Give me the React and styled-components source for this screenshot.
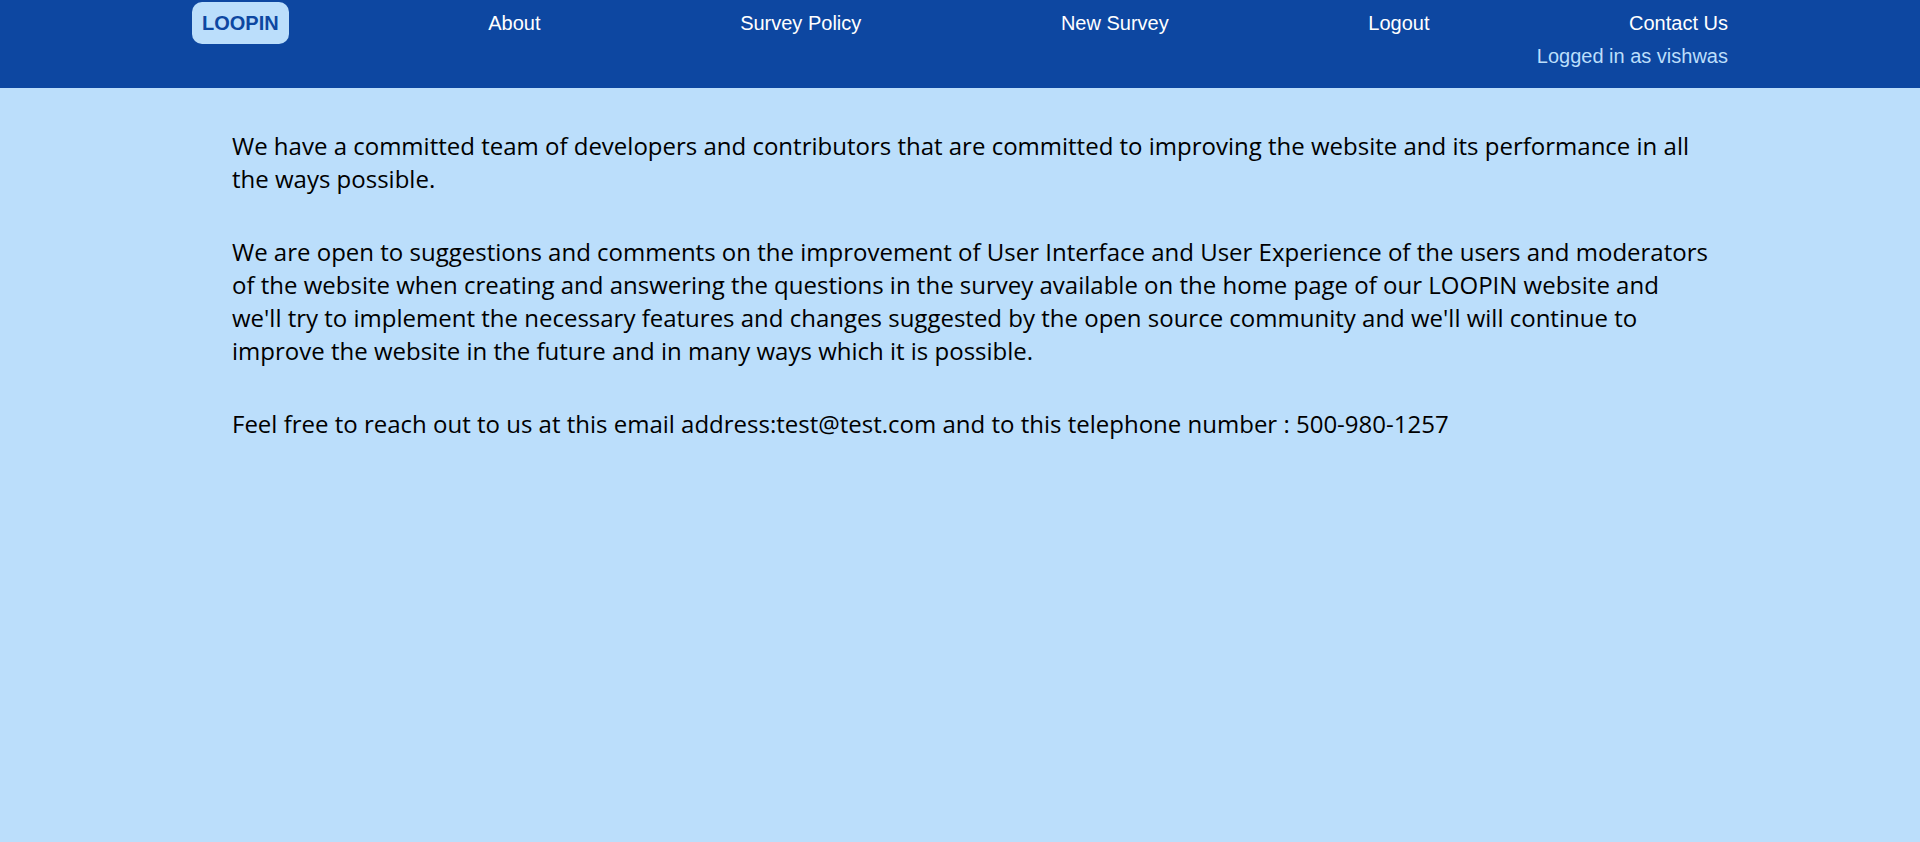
import React from "react";
import styled, { createGlobalStyle } from "styled-components";

const GlobalStyle = createGlobalStyle`
  * { box-sizing: border-box; }
  body {
    margin: 0;
    background: #bbdefb;
    font-family: "Liberation Sans", Arial, sans-serif;
  }
`;

const Header = styled.header`
  background: #0d47a1;
  padding: 2px 10% 20px;
  font-size: 20px;
  line-height: 24px;
`;

const Nav = styled.nav`
  display: flex;
  justify-content: space-between;
  align-items: center;
`;

const NavLink = styled.a`
  color: #ffffff;
  text-decoration: none;
`;

const Brand = styled(NavLink)`
  padding: 9px 10px;
  border-radius: 10px;
  background: #bbdefb;
  color: #0d47a1;
  font-weight: bold;
`;

const Status = styled.p`
  margin: 0;
  text-align: right;
  color: #bbdefb;
`;

const Content = styled.main`
  margin: 0 10%;
  padding: 41px 16px 40px 40px;
  font-family: "Open Sans", "Segoe UI", sans-serif;
  font-size: 24px;
  line-height: 33px;
  color: #000000;
`;

const Paragraph = styled.p`
  margin: 0 0 40px;
`;

const links = ["About", "Survey Policy", "New Survey", "Logout", "Contact Us"];

export default function App() {
  return (
    <>
      <GlobalStyle />
      <Header>
        <Nav>
          <Brand href="#home">LOOPIN</Brand>
          {links.map((label) => (
            <NavLink key={label} href={`#${label.toLowerCase().replace(" ", "-")}`}>
              {label}
            </NavLink>
          ))}
        </Nav>
        <Status>Logged in as vishwas</Status>
      </Header>
      <Content>
        <Paragraph>
          We have a committed team of developers and contributors that are committed to improving
          the website and its performance in all the ways possible.
        </Paragraph>
        <Paragraph>
          We are open to suggestions and comments on the improvement of User Interface and User
          Experience of the users and moderators of the website when creating and answering the
          questions in the survey available on the home page of our LOOPIN website and we'll try to
          implement the necessary features and changes suggested by the open source community and
          we'll will continue to improve the website in the future and in many ways which it is
          possible.
        </Paragraph>
        <Paragraph>
          Feel free to reach out to us at this email address:test@test.com and to this telephone
          number : 500-980-1257
        </Paragraph>
      </Content>
    </>
  );
}
